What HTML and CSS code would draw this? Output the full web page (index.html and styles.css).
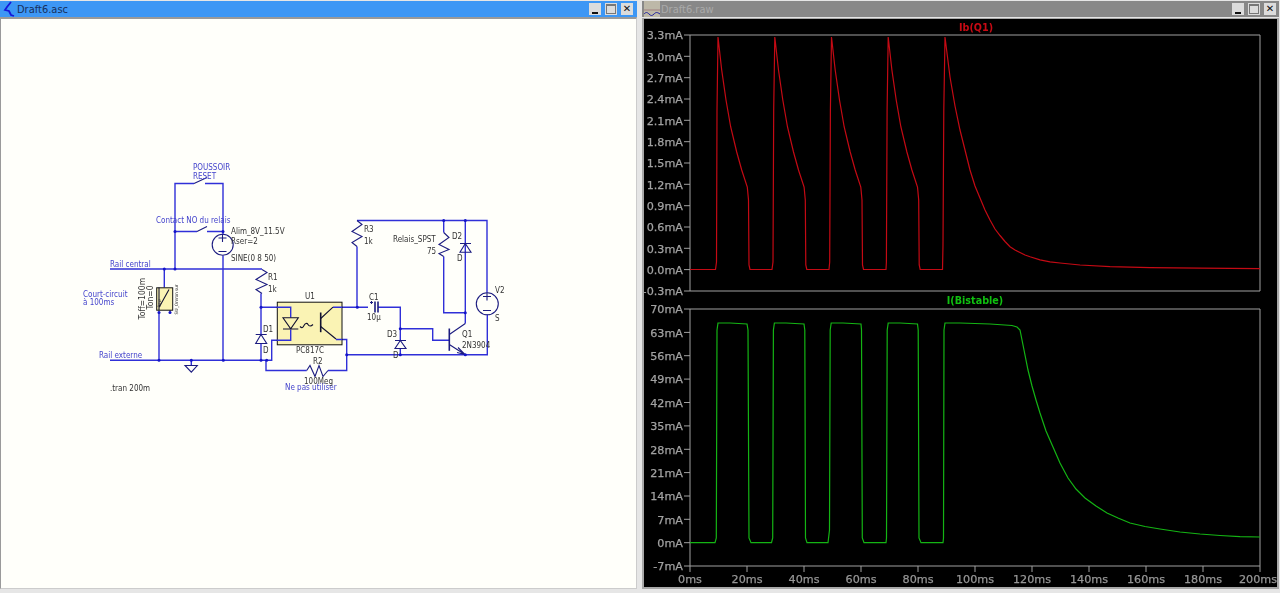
FILE: index.html
```html
<!DOCTYPE html>
<html lang="en">
<head>
<meta charset="utf-8">
<title>LTspice</title>
<link rel="stylesheet" href="styles.css">
</head>
<body>
<div class="desktop">
  <section class="window window-active">
    <header class="titlebar">
      <svg class="app-icon" viewBox="0 0 14 16"><path class="bracket" d="M9 1 5 6 3 9l4 1 2 4 3 1"/></svg>
      <span class="title">Draft6.asc</span>
      <div class="buttons">
        <span class="btn"><i class="glyph-min"></i></span>
        <span class="btn"><i class="glyph-max"></i></span>
        <span class="btn"><i class="glyph-close">✕</i></span>
      </div>
    </header>
    <div class="client">
      <svg class="canvas" viewBox="1 20 635 568">
        <g class="wires">
          <path d="M175 270V184H194M205 184H223V235M175 232H197M207 232H223"/>
          <path d="M110 269.5H262M164.3 269.5V288M223 256V360.7M110 360.7H271.7V340.7H277"/>
          <path d="M159 312V360.7M191.3 360.7V366"/>
          <path d="M261 294V335M261 344V360.7M261 307.7H277M342 307.7H368M378 307.7H400.3V341M400.3 349V355.3"/>
          <path d="M357 221H487V293M357 247V307.7M443.7 221V233M443.7 257V313.3H465.3M465.3 221V324M400.3 329.3H432.7V340.7H449.3"/>
          <path d="M342 340H346.7V371H328M306.7 371H266V360.7M346.7 355.3H487.3V315"/>
        </g>
        <rect class="opto" x="277.3" y="302.7" width="64.7" height="42.6"/>
        <rect class="sw" x="156.7" y="288.3" width="16" height="22.4"/>
        <g class="wires">
          <path d="M277 307.7H290.7V318M290.7 330V340.7H277M333 307.7H342M336 340H342"/>
        </g>
        <g class="parts">
          <path d="M194 184 207 178M197 232 207 227"/>
          <path d="M262 270 267 273 256 280 267 285 256 290 262 294M357 221 362 225 352 232 362 237 352 243 357 247"/>
          <path d="M443.7 233 449 238 439 245 449 250 439 254 443.7 257"/>
          <path d="M306.7 371 310 366 315 377 319 366 323 377 328 371"/>
          <path d="M255.7 335H266.7M261 335 255.7 344H266.7Z"/>
          <path d="M460 244H471M465.3 244 460 252.7H471Z"/>
          <path d="M395 341H406M400.3 341 395 349H406Z"/>
          <path class="dark" d="M283 318.3H298.3L290.7 329.3ZM283 329.5H298.3"/>
          <path class="dark" d="M300 327c2 2 3 1 4-1s3-3 4-1 3 2 5 0"/>
          <path class="dark heavy" d="M320.7 313V332.7"/>
          <path class="dark" d="M320.7 319 333 307.7M320.7 327 336 339.5"/>
          <path class="heavy" d="M375 302V313M378 302V313"/>
          <path d="M370 303H373M371.5 301.5V304.5"/>
          <path class="heavy" d="M449.3 329V351.3"/>
          <path d="M449.3 335 465.3 324M449.3 345 465.3 355.3M458 348 465 355 457 353"/>
          <circle cx="222.7" cy="245.3" r="10.5"/>
          <circle cx="487.3" cy="304.3" r="11"/>
          <path d="M218.5 238.5H226.5M222.5 234.5V242.5M218.5 252H226.5M483 297H491M487 293V301M483 311H491"/>
          <path d="M185 366H197.3L191.3 372.7Z"/>
          <path class="dark" d="M159 288V311M170 310.7V312M159 308 169 290"/>
        </g>
        <g class="dots">
          <circle cx="175" cy="232" r="1.5"/><circle cx="223" cy="232" r="1.5"/>
          <circle cx="164.3" cy="269.5" r="1.5"/><circle cx="175" cy="269.5" r="1.5"/>
          <circle cx="159" cy="313" r="1.5"/><circle cx="170" cy="313" r="1.5"/>
          <circle cx="159" cy="360.7" r="1.5"/><circle cx="191.3" cy="360.7" r="1.5"/>
          <circle cx="223.3" cy="360.7" r="1.5"/><circle cx="261" cy="360.7" r="1.5"/>
          <circle cx="266.7" cy="360.7" r="1.5"/><circle cx="261" cy="307.7" r="1.5"/>
          <circle cx="357.3" cy="307.7" r="1.5"/><circle cx="400.3" cy="329.3" r="1.5"/>
          <circle cx="400.3" cy="355.3" r="1.5"/><circle cx="346.7" cy="355.3" r="1.5"/>
          <circle cx="465.3" cy="355.3" r="1.5"/><circle cx="465.3" cy="313.3" r="1.5"/>
          <circle cx="443.7" cy="221" r="1.5"/><circle cx="465.3" cy="221" r="1.5"/>
        </g>
        <g class="label-blue">
          <text x="193" y="170">POUSSOIR</text>
          <text x="193" y="179">RESET</text>
          <text x="156" y="223">Contact NO du relais</text>
          <text x="110" y="267">Rail central</text>
          <text x="83" y="297">Court-circuit</text>
          <text x="83" y="305">à 100ms</text>
          <text x="99" y="358">Rail externe</text>
          <text x="285" y="390">Ne pas utiliser</text>
        </g>
        <g class="label-dark">
          <text x="231" y="234">Alim_8V_11.5V</text>
          <text x="231" y="244">Rser=2</text>
          <text x="231" y="261">SINE(0 8 50)</text>
          <text x="268" y="280">R1</text>
          <text x="268" y="292">1k</text>
          <text x="263" y="332">D1</text>
          <text x="263" y="353">D</text>
          <text x="305" y="299">U1</text>
          <text x="296" y="353">PC817C</text>
          <text x="313" y="364">R2</text>
          <text x="304" y="384">100Meg</text>
          <text x="369" y="300">C1</text>
          <text x="367" y="320">10µ</text>
          <text x="387" y="337">D3</text>
          <text x="393" y="358">D</text>
          <text x="462" y="337">Q1</text>
          <text x="462" y="348">2N3904</text>
          <text x="364" y="232">R3</text>
          <text x="364" y="244">1k</text>
          <text x="393" y="242">Relais_SPST</text>
          <text x="427" y="254">75</text>
          <text x="452" y="239">D2</text>
          <text x="457" y="261">D</text>
          <text x="495" y="293">V2</text>
          <text x="495" y="321">S</text>
          <text x="110" y="391">.tran 200m</text>
          <text class="rot" transform="translate(145 320) rotate(-90)">Toff=100m</text>
          <text class="rot" transform="translate(153 310) rotate(-90)">Ton=0</text>
          <text class="tiny" transform="translate(178 315) rotate(-90)">SW_Omron sur</text>
          <text class="tiny" transform="translate(161 308) rotate(-90)">Rsw</text>
        </g>
      </svg>
    </div>
  </section>
  <section class="window window-idle">
    <header class="titlebar">
      <svg class="app-icon wave-icon" viewBox="0 0 16 16">
        <rect class="wave-bg" width="16" height="16"/>
        <path class="wave-red" d="M0 9h16"/>
        <path class="wave-blue" d="M0 13c2-2 3-2 5 0s3 2 5 0 3-2 6 0"/>
      </svg>
      <span class="title">Draft6.raw</span>
      <div class="buttons">
        <span class="btn"><i class="glyph-min"></i></span>
        <span class="btn"><i class="glyph-max"></i></span>
        <span class="btn"><i class="glyph-close">✕</i></span>
      </div>
    </header>
    <div class="client">
      <svg class="scope" viewBox="644 19 633 568">
        <g class="frame">
          <path d="M684 35H1260V291H684M690 35V291"/>
          <path d="M684 309H1260V566H684M690 309V566"/>
          <path d="M684 56.3H690M684 77.7H690M684 99H690M684 120.3H690M684 141.7H690M684 163H690M684 184.3H690M684 205.7H690M684 227H690M684 248.3H690M684 269.6H690"/>
          <path d="M684 332.4H690M684 355.7H690M684 379.1H690M684 402.5H690M684 425.9H690M684 449.3H690M684 472.6H690M684 496H690M684 519.3H690M684 542.7H690"/>
          <path d="M690 566V572M747 566V572M804 566V572M861 566V572M918 566V572M975 566V572M1032 566V572M1089 566V572M1146 566V572M1203 566V572M1260 566V572"/>
        </g>
        <g class="ylabels">
          <text x="683" y="39">3.3mA</text><text x="683" y="60.5">3.0mA</text><text x="683" y="82">2.7mA</text>
          <text x="683" y="103">2.4mA</text><text x="683" y="124.5">2.1mA</text><text x="683" y="146">1.8mA</text>
          <text x="683" y="167">1.5mA</text><text x="683" y="188.5">1.2mA</text><text x="683" y="210">0.9mA</text>
          <text x="683" y="231">0.6mA</text><text x="683" y="252.5">0.3mA</text><text x="683" y="273.5">0.0mA</text>
          <text x="683" y="295">-0.3mA</text>
          <text x="683" y="313">70mA</text><text x="683" y="336.5">63mA</text><text x="683" y="360">56mA</text>
          <text x="683" y="383">49mA</text><text x="683" y="406.5">42mA</text><text x="683" y="430">35mA</text>
          <text x="683" y="453.5">28mA</text><text x="683" y="476.5">21mA</text><text x="683" y="500">14mA</text>
          <text x="683" y="523.5">7mA</text><text x="683" y="547">0mA</text><text x="683" y="570">-7mA</text>
        </g>
        <g class="xlabels">
          <text x="690" y="583">0ms</text><text x="747" y="583">20ms</text><text x="804" y="583">40ms</text>
          <text x="861" y="583">60ms</text><text x="918" y="583">80ms</text><text x="975" y="583">100ms</text>
          <text x="1032" y="583">120ms</text><text x="1089" y="583">140ms</text><text x="1146" y="583">160ms</text>
          <text x="1203" y="583">180ms</text><text x="1258" y="583">200ms</text>
        </g>
        <text class="trace-title red-text" x="976" y="31">Ib(Q1)</text>
        <text class="trace-title green-text" x="975" y="304">I(Bistable)</text>
        <polyline class="trace red" points="690,269.5 715.5,269.5 716.5,262 717,110 718,37 721.7,70 726,100 730.7,127 736.7,152 741.7,170 747.3,187 748.5,200 749,265 750,269.5 772,269.5 773,262 773.7,110 774.8,37 778.5,70 782.8,100 787.5,127 793.5,152 798.5,170 804.1,187 805.3,200 805.8,265 806.8,269.5 829,269.5 829.7,262 830.4,110 831.5,37 835.2,70 839.5,100 844.2,127 850.2,152 855.2,170 860.8,187 862,200 862.5,265 863.5,269.5 886,269.5 886.4,262 887.1,110 888.2,37 891.9,70 896.2,100 900.9,127 906.9,152 911.9,170 917.5,187 918.7,200 919.2,265 920.2,269.5 942.5,269.5 943,245 943.8,110 945,37 950,77 955,106 960,130 965,150 970,170 975,186 980,198 985,210 990,220 995,229 1000,235.5 1005,241.5 1010,246.7 1015,250 1020,252.5 1025,255 1030,256.7 1040,259.8 1050,261.8 1060,263 1080,265 1110,266.7 1150,267.6 1200,268.2 1260,268.7"/>
        <polyline class="trace green" points="690,542.7 715,542.7 716.3,538 717,330 718,323 730,323 747,324 748,330 749,538 751,542.7 771.5,542.7 772.7,538 773.4,330 774.4,323 786,323 804,324 804.8,330 805.5,538 807,542.7 828,542.7 829.5,530 830.2,330 831.2,323 843,323 861,324 861.5,330 862.3,538 864,542.7 886,542.7 886.5,538 887.2,330 888.2,323 900,323 917.5,324 918.2,330 919,538 921,542.7 943,542.7 943.5,538 944,330 945,323 960,323 990,324 1012,325.5 1017,327 1020,330 1024,350 1028,370 1032,386 1036,400 1040,413 1046,431 1053,447 1060,463 1068,478 1076,489 1085,498 1096,506 1107,513 1118,518 1130,523 1145,526.5 1160,529 1180,532 1200,534 1220,535.5 1240,536.6 1260,537"/>
      </svg>
    </div>
  </section>
</div>
</body>
</html>
```
FILE: styles.css
```css
* { box-sizing: border-box; }
html, body { margin: 0; height: 593px; overflow: hidden; background: #e6e6e6; }
.desktop { display: flex; height: 593px; padding-top: 1px; gap: 5px; }
.window { display: flex; flex-direction: column; height: 588px; }
.window-active { width: 637px; }
.window-idle { flex: 1; padding-right: 1px; }
.titlebar {
  display: flex; align-items: center; height: 16px; flex: none; padding: 0 4px 0 2px;
  font: 11px "DejaVu Sans Condensed", "DejaVu Sans", sans-serif;
}
.window-active .titlebar { background: #3d97f5; color: #17305c; }
.window-idle .titlebar { background: #888; color: #aaa; padding-right: 3px; }
.app-icon { width: 14px; height: 16px; flex: none; margin-right: 1px; }
.bracket { fill: none; stroke: #1616d8; stroke-width: 1.8; }
.wave-icon { width: 16px; }
.wave-bg { fill: #bdb8a8; }
.wave-red { fill: none; stroke: #a08080; stroke-width: 1; }
.wave-blue { fill: none; stroke: #2020a0; stroke-width: 1; }
.title { flex: 1; }
.buttons { display: flex; gap: 4px; }
.btn { width: 12px; height: 12px; background: #dcdcdc; position: relative; display: block; }
.glyph-min { position: absolute; left: 3px; bottom: 1px; width: 6px; height: 2px; background: #111; }
.glyph-max { position: absolute; left: 1px; top: 1px; width: 10px; height: 10px; border: 1px solid #777; border-top-width: 2px; }
.glyph-close { position: absolute; inset: 0; font: bold 10px/12px "DejaVu Sans", sans-serif; text-align: center; color: #111; }
.client { flex: 1; margin-top: 1px; background: #fff; min-height: 0; }
.window-active .client { border-top: 2px solid #9a9a9a; border-left: 1px solid #9a9a9a; border-right: 1px solid #ccc; border-bottom: 1px solid #ccc; margin-top: 0; }
.window-idle .client { border: 2px solid #a8a8a8; border-top-width: 1px; background: #000; }
.canvas, .scope { display: block; width: 100%; height: 100%; filter: blur(0.3px); }
.canvas { background: #fffffa; }
.scope { background: #000; }
.wires path { fill: none; stroke: #3030d8; stroke-width: 1.4; }
.parts path, .parts circle { fill: none; stroke: #1c1c80; stroke-width: 1.1; }
.parts .dark { stroke: #111130; }
.parts .heavy { stroke-width: 1.6; }
.dots circle { fill: #1414c8; }
.opto { fill: #faf3b4; stroke: #111; stroke-width: 1; }
.sw { fill: #faf3b4; stroke: #111; stroke-width: 1; }
.label-blue text { font: 8px "DejaVu Sans Condensed", "DejaVu Sans", sans-serif; fill: #4444cc; }
.label-dark text { font: 8px "DejaVu Sans Condensed", "DejaVu Sans", sans-serif; fill: #333; }
.label-dark .rot { font-size: 8.5px; }
.label-dark .tiny { font-size: 4.5px; }
.frame path { fill: none; stroke: #a0a0a0; stroke-width: 1; }
.ylabels text { font: 11.2px "DejaVu Sans", sans-serif; fill: #a2a2a2; stroke: #a2a2a2; stroke-width: 0.25; text-anchor: end; }
.xlabels text { font: 11.2px "DejaVu Sans", sans-serif; fill: #969696; stroke: #969696; stroke-width: 0.25; text-anchor: middle; }
.trace-title { font: bold 10.7px "DejaVu Sans Condensed", "DejaVu Sans", sans-serif; text-anchor: middle; }
.red-text { fill: #c80a14; }
.green-text { fill: #10c010; }
.trace { fill: none; stroke-width: 1.2; }
.red { stroke: #c40a14; }
.green { stroke: #14b414; }
```
